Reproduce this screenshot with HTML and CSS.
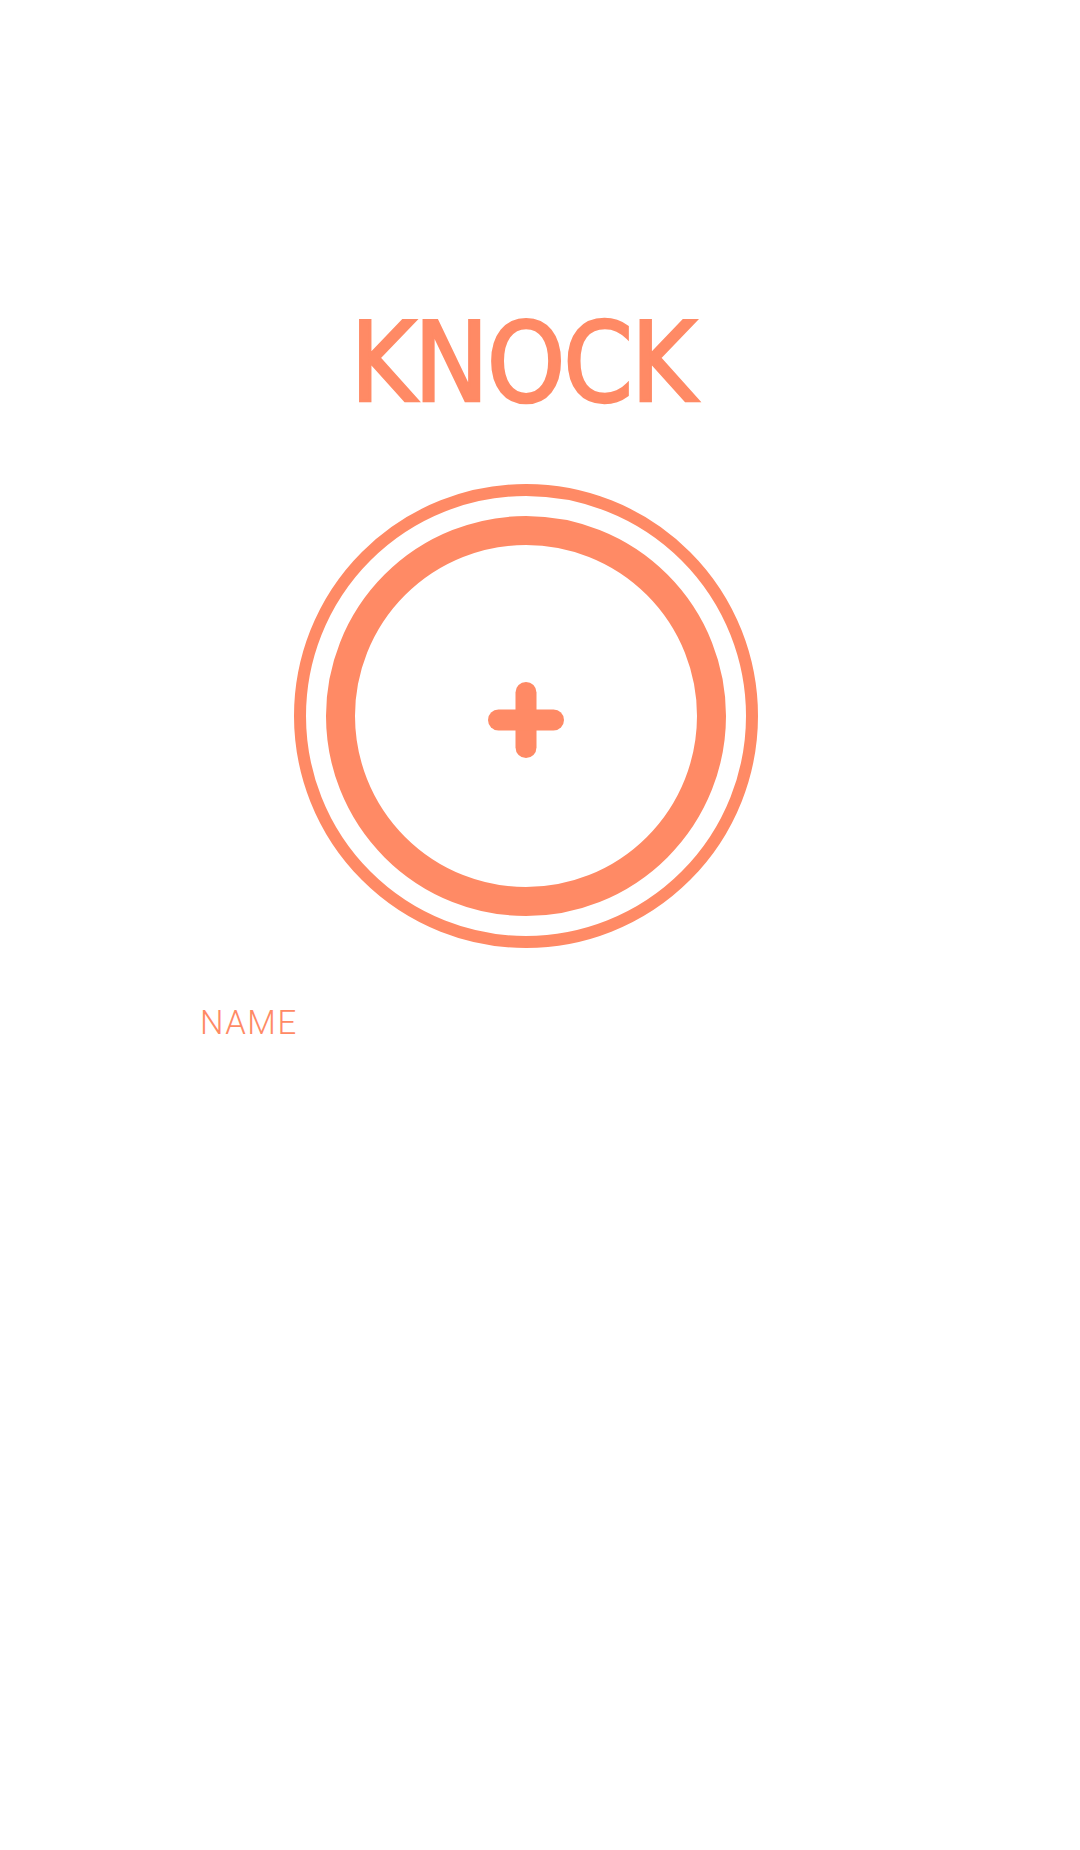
FILE: index.html
```html
<!DOCTYPE html>
<html lang="en">
<head>
<meta charset="utf-8">
<title>Knock</title>
<link rel="stylesheet" href="styles.css">
</head>
<body>
<main class="screen">
  <h1 class="title">KNOCK</h1>
  <div class="ring-outer">
    <div class="ring-inner">
      <svg class="plus" width="76" height="76" viewBox="0 0 76 76" aria-hidden="true">
        <line x1="38" y1="10.5" x2="38" y2="65.5" />
        <line x1="10.5" y1="38" x2="65.5" y2="38" />
      </svg>
    </div>
  </div>
  <label class="name-label">NAME</label>
</main>
</body>
</html>
```

FILE: styles.css
```css
html, body {
  margin: 0;
  padding: 0;
  background: #ffffff;
}

.screen {
  width: 1051px;
  height: 1850px;
  display: flex;
  flex-direction: column;
  align-items: center;
}

.title {
  margin: 0 6px 0 0;
  padding-top: 307px;
  font-family: "DejaVu Sans Condensed", "DejaVu Sans", sans-serif;
  font-weight: 400;
  font-size: 111px;
  line-height: 1;
  color: #ff8a65;
  letter-spacing: -2px;
  -webkit-text-stroke: 2.5px #ff8a65;
}

.ring-outer {
  margin-top: 66px;
  width: 464px;
  height: 464px;
  box-sizing: border-box;
  border: 12px solid #ff8a65;
  border-radius: 50%;
  display: flex;
  align-items: center;
  justify-content: center;
}

.ring-inner {
  width: 400px;
  height: 400px;
  box-sizing: border-box;
  border: 29px solid #ff8a65;
  border-radius: 50%;
  display: flex;
  align-items: center;
  justify-content: center;
}

.plus {
  margin-top: 8px;
  display: block;
}

.plus line {
  stroke: #ff8a65;
  stroke-width: 21;
  stroke-linecap: round;
}

.name-label {
  align-self: flex-start;
  margin-top: 55px;
  margin-left: 200px;
  font-family: Roboto, "Liberation Sans", sans-serif;
  font-weight: 300;
  font-size: 33px;
  letter-spacing: 1.5px;
  color: #ff8a65;
}
```
